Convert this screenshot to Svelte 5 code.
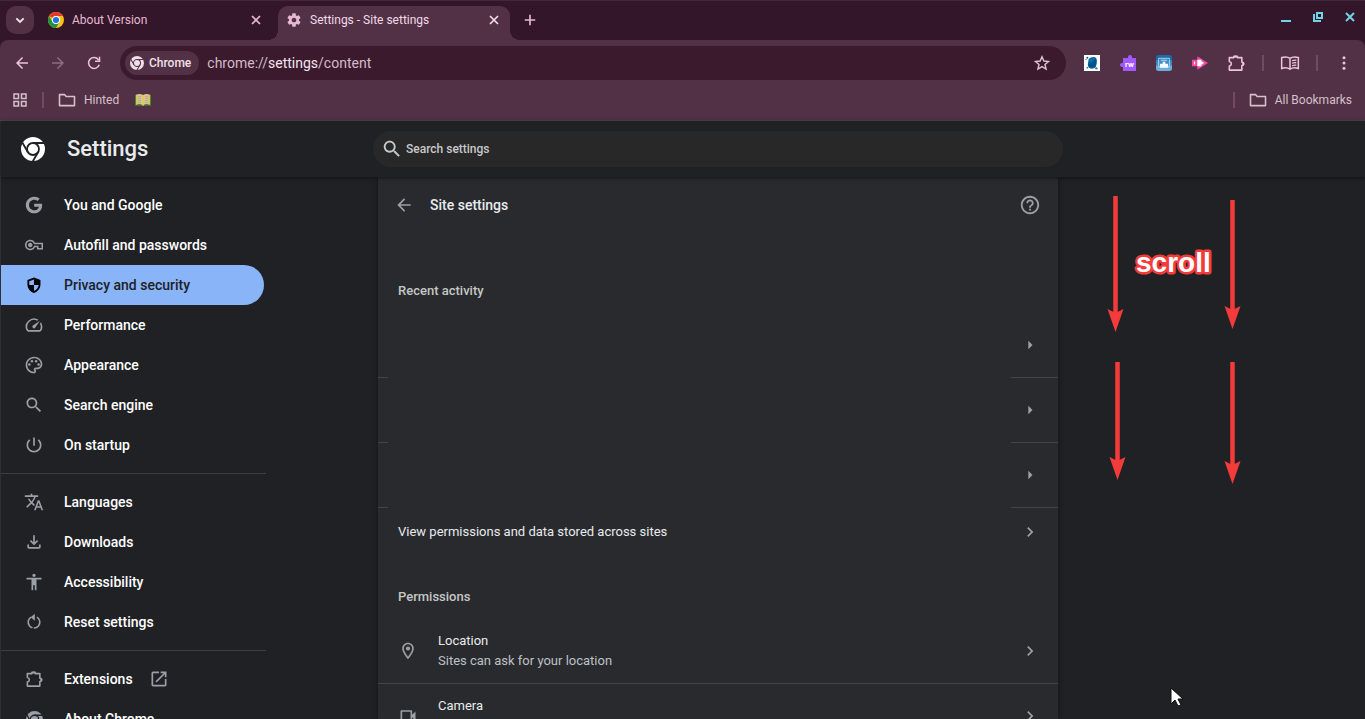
<script>
  const icons = {
    google:
      '<path transform="translate(2 2) scale(.833)" d="M12.24 10.285V14.4h6.806c-.275 1.765-2.056 5.174-6.806 5.174-4.095 0-7.439-3.389-7.439-7.574s3.345-7.574 7.439-7.574c2.33 0 3.891.989 4.785 1.849l3.254-3.138C18.189 1.186 15.479 0 12.24 0c-6.635 0-12 5.365-12 12s5.365 12 12 12c6.926 0 11.52-4.869 11.52-11.726 0-.788-.085-1.39-.189-1.989H12.24z"/>',
    key: '<path transform="translate(1.2 1.2) scale(.9)" d="M22 18h-6v-3h-2.68c-1.14 2.42-3.6 4-6.32 4-3.86 0-7-3.14-7-7s3.14-7 7-7c2.72 0 5.17 1.58 6.32 4H24v9h-2zm-4-2h4v-5H11.94l-.23-.67C11.01 8.34 9.11 7 7 7c-2.76 0-5 2.24-5 5s2.24 5 5 5c2.11 0 4.01-1.34 4.71-3.33l.23-.67H18v3zM7 15c-1.65 0-3-1.35-3-3s1.35-3 3-3 3 1.35 3 3-1.35 3-3 3z"/>',
    shield:
      '<path transform="translate(1.500 1.600) scale(.87)" d="M12 1.500L3 5v6c0 5.550 3.840 10.740 9 12 5.160-1.260 9-6.450 9-12V5l-9-3.500zm0 10.490h6.500c-.530 4.120-3 6.790-6.500 7.940V12H5.500V6.700l6.500-2.500v7.790z"/>',
    speed:
      '<path d="M20.38 8.57l-1.23 1.85a8 8 0 0 1-.22 7.58H5.07A8 8 0 0 1 15.58 6.85l1.85-1.23A10 10 0 0 0 3.35 19a2 2 0 0 0 1.72 1h13.85a2 2 0 0 0 1.74-1 10 10 0 0 0-.27-10.44z"/><path d="M10.59 15.41a2 2 0 0 0 2.83 0l5.66-8.49-8.49 5.66a2 2 0 0 0 0 2.83z"/>',
    palette:
      '<path d="M12 22C6.49 22 2 17.51 2 12S6.49 2 12 2s10 4.04 10 9c0 3.31-2.69 6-6 6h-1.77c-.28 0-.5.22-.5.5 0 .12.05.23.13.33.41.47.64 1.06.64 1.67 0 1.38-1.12 2.5-2.5 2.5zm0-18c-4.41 0-8 3.59-8 8s3.59 8 8 8c.28 0 .5-.22.5-.5 0-.16-.08-.28-.14-.35-.41-.46-.63-1.05-.63-1.65 0-1.38 1.12-2.5 2.5-2.5H16c2.21 0 4-1.79 4-4 0-3.86-3.59-7-8-7z"/><circle cx="6.500" cy="11.500" r="1.500"/><circle cx="9.500" cy="7.500" r="1.500"/><circle cx="14.500" cy="7.500" r="1.500"/><circle cx="17.500" cy="11.500" r="1.500"/>',
    search:
      '<path d="M15.500 14h-.79l-.28-.27C15.410 12.590 16 11.110 16 9.500 16 5.910 13.090 3 9.500 3S3 5.910 3 9.500 5.910 16 9.500 16c1.610 0 3.090-.590 4.230-1.570l.27.28v.79l5 4.990L20.490 19l-4.990-5zm-6 0C7.010 14 5 11.990 5 9.500S7.010 5 9.500 5 14 7.010 14 9.500 11.990 14 9.500 14z"/>',
    power:
      '<path d="M13 3h-2v10h2V3zm4.830 2.170l-1.420 1.420C17.990 7.860 19 9.810 19 12c0 3.870-3.130 7-7 7s-7-3.130-7-7c0-2.190 1.010-4.140 2.580-5.420L6.170 5.170C4.230 6.820 3 9.260 3 12c0 4.970 4.030 9 9 9s9-4.030 9-9c0-2.740-1.230-5.180-3.170-6.830z"/>',
    translate:
      '<path d="M12.870 15.070l-2.540-2.510.030-.030c1.740-1.940 2.980-4.170 3.710-6.530H17V4h-7V2H8v2H1v1.990h11.170C11.500 7.920 10.440 9.750 9 11.350 8.070 10.320 7.300 9.190 6.690 8h-2c.730 1.630 1.730 3.170 2.980 4.560l-5.090 5.020L4 19l5-5 3.110 3.110.760-2.040zM18.500 10h-2L12 22h2l1.120-3h4.750L21 22h2l-4.500-12zm-2.620 7l1.620-4.330L19.120 17h-3.240z"/>',
    download:
      '<path d="M18 15v3H6v-3H4v3c0 1.100.900 2 2 2h12c1.100 0 2-.900 2-2v-3h-2zm-1-4l-1.410-1.410L13 12.170V4h-2v8.170L8.410 9.590 7 11l5 5 5-5z"/>',
    person:
      '<path d="M12 2c1.100 0 2 .900 2 2s-.900 2-2 2-2-.900-2-2 .900-2 2-2zm9 7h-6v13h-2v-6h-2v6H9V9H3V7h18v2z"/>',
    reset:
      '<path d="M15.500 6.200a7 7 0 1 1-7 0" fill="none" stroke="currentColor" stroke-width="1.900" stroke-dasharray="18 1.500 30"/><path d="M13 2v8.500L8 6.200z"/>',
    puzzle:
      '<path d="M4 5.500h5.500v-1.500h4V5.500H19V11c3 0 3 4 0 4v5.500H4v-4.800c3.200-.6 3.200-4.800 0-5.400z" fill="none" stroke="currentColor" stroke-width="1.900" stroke-linejoin="round"/><path d="M9 5.500a2.500 2.500 0 0 1 5 0zM19.500 10.500a2.500 2.500 0 0 1 0 5z"/>',
    open: '<path d="M19 19H5V5h7V3H5c-1.110 0-2 .900-2 2v14c0 1.100.890 2 2 2h14c1.100 0 2-.900 2-2v-7h-2v7zM14 3v2h3.590l-9.830 9.830 1.410 1.410L19 6.410V10h2V3h-7z"/>',
    back: '<path d="M20 11H7.830l5.590-5.590L12 4l-8 8 8 8 1.410-1.410L7.830 13H20v-2z"/>',
    forward: '<path d="M4 11h12.170l-5.590-5.590L12 4l8 8-8 8-1.410-1.410L16.170 13H4v-2z"/>',
    reload:
      '<path d="M19 14.200A7.300 7.300 0 1 1 18.200 8" fill="none" stroke="currentColor" stroke-width="2"/><path d="M20.400 3.500v7h-7v-2h5v-5z"/>',
    help: '<path d="M11 18h2v-2h-2v2zm1-16C6.480 2 2 6.480 2 12s4.480 10 10 10 10-4.480 10-10S17.520 2 12 2zm0 18c-4.410 0-8-3.590-8-8s3.590-8 8-8 8 3.590 8 8-3.590 8-8 8zm0-14c-2.210 0-4 1.790-4 4h2c0-1.100.900-2 2-2s2 .900 2 2c0 2-3 1.750-3 5h2c0-2.250 3-2.500 3-5 0-2.210-1.790-4-4-4z"/>',
    chevron: '<path d="M10 6L8.590 7.410 13.170 12l-4.580 4.590L10 18l6-6z"/>',
    triangle: '<path d="M10 7v10l5-5z"/>',
    down: '<path d="M6.500 9.500l5.500 5.500 5.500-5.500" fill="none" stroke="currentColor" stroke-width="2.800"/>',
    close: '<path d="M6 6l12 12M18 6L6 18" fill="none" stroke="currentColor" stroke-width="2.600"/>',
    plus: '<path d="M12 5v14M5 12h14" fill="none" stroke="currentColor" stroke-width="2.200"/>',
    gear: '<path d="M19.430 12.980c.040-.320.070-.640.070-.980s-.030-.660-.070-.980l2.110-1.650c.190-.150.240-.420.120-.640l-2-3.460c-.120-.220-.390-.300-.610-.220l-2.490 1c-.520-.400-1.080-.730-1.690-.980l-.380-2.650C14.460 2.180 14.250 2 14 2h-4c-.250 0-.460.180-.490.420l-.380 2.650c-.610.250-1.170.590-1.690.980l-2.490-1c-.230-.090-.490 0-.610.220l-2 3.460c-.130.220-.070.490.120.640l2.110 1.650c-.040.320-.070.650-.070.980s.030.660.070.980l-2.110 1.650c-.190.150-.240.420-.120.640l2 3.460c.120.220.390.300.610.220l2.490-1c.520.400 1.080.730 1.690.980l.380 2.650c.030.240.240.420.490.420h4c.250 0 .460-.180.490-.420l.380-2.650c.610-.250 1.170-.590 1.690-.980l2.490 1c.230.090.490 0 .610-.220l2-3.460c.120-.220.070-.490-.120-.640l-2.110-1.650zM12 15.500c-1.930 0-3.500-1.570-3.500-3.500s1.570-3.500 3.500-3.500 3.500 1.570 3.500 3.500-1.570 3.500-3.500 3.500z"/>',
    place:
      '<path d="M12 2C8.130 2 5 5.130 5 9c0 5.250 7 13 7 13s7-7.750 7-13c0-3.870-3.130-7-7-7zM7 9c0-2.760 2.240-5 5-5s5 2.240 5 5c0 2.880-2.880 7.190-5 9.880C9.920 16.210 7 11.850 7 9z"/><circle cx="12" cy="9" r="2.500"/>',
    camera:
      '<path d="M15 7v10H5V7h10m1-2H4c-.550 0-1 .450-1 1v12c0 .550.450 1 1 1h12c.550 0 1-.450 1-1v-4.500l4 4v-11l-4 4V6c0-.550-.450-1-1-1z"/>',
    star: '<path d="M12 3.600l2.500 5.700 6.200.6-4.700 4.100 1.400 6.100-5.400-3.200-5.400 3.200 1.400-6.100-4.700-4.100 6.200-.6z" fill="none" stroke="currentColor" stroke-width="1.900"/>',
    folder:
      '<path d="M3 5.500h6l2 2.200h10v11H3z" fill="none" stroke="currentColor" stroke-width="1.900" stroke-linejoin="round"/>',
    apps: '<path d="M4 4h6v6H4zM14 4h6v6h-6zM4 14h6v6H4zM14 14h6v6h-6z" fill="none" stroke="currentColor" stroke-width="2"/>',
    dots: '<circle cx="12" cy="5" r="2"/><circle cx="12" cy="12" r="2"/><circle cx="12" cy="19" r="2"/>',
    reader:
      '<path d="M12 6.500C9.500 4.500 5 4.500 2 5.500v13c3-1 7.500-1 10 1 2.500-2 7-2 10-1v-13c-3-1-7.500-1-10 1zv13" fill="none" stroke="currentColor" stroke-width="1.800"/><path d="M14.500 9.300q2.500-1 5-.6M14.500 12.300q2.500-1 5-.6M14.500 15.300q2.500-1 5-.6" fill="none" stroke="currentColor" stroke-width="1.600"/>',
    bookColor:
      '<path d="M0 5l2-1v15h20V4l2 1v16H0z" fill="#2f7a1e"/><path d="M2 4q6-2.500 10 1v15q-4-3-10-1z" fill="#dcc49a"/><path d="M22 4q-6-2.500-10 1v15q4-3 10-1z" fill="#dcc49a"/><path d="M4 7h5M4 10h5M4 13h5M4 16h5M15 7h5M15 10h5M15 13h5M15 16h5" stroke="#b8967a" stroke-width="1"/><path d="M12 4v17M2 4v15M22 4v15" stroke="#c9dc2d" stroke-width="1.500"/>',
    extLeaf:
      '<path d="M0 0h24v24H0z" fill="#fff"/><path d="M7 6q3-3.500 8-3 4 .5 4 4v6q0 5-4 7-5 1.500-8-1.500-2-3-1-7z" fill="#0c6ca6"/><path d="M6 13q5 0 12-8 2 4 0 10-3 5-8 5-4-2-4-7z" fill="#075189"/><circle cx="5" cy="4" r="1.500" fill="#075a94"/><circle cx="18.500" cy="20" r="1.800" fill="#1a86bf"/><circle cx="5" cy="19" r="1.300" fill="#1a86bf"/><circle cx="3" cy="7" r="1" fill="#1a86bf"/>',
    extBox:
      '<rect width="24" height="24" rx="4" fill="#1c6bab"/><path d="M0 12h24v8a4 4 0 0 1-4 4H4a4 4 0 0 1-4-4z" fill="#6cadd9"/><path d="M0 8h24v8H0z" fill="#3f8cc4"/><path d="M4 5h16v13H4z" fill="none" stroke="#a9d3ee" stroke-width="1.500"/><path d="M6 13h12v6H6zM10 10h4v3h-4z" fill="#f3faff"/><path d="M7 7h10v1.500H7z" fill="#d7edfa"/>',
    extPlay:
      '<path d="M0 7h8V2l16 10L8 22v-5H0z" fill="#f04aa5"/><path d="M8 7h6v2l4 3-4 3v2H8z" fill="#fff"/><path d="M3 9l2 3-2 3" fill="#fff"/>',
  };

  const menuGroups = [
    [
      ['google', 'You and Google'],
      ['key', 'Autofill and passwords'],
      ['shield', 'Privacy and security'],
      ['speed', 'Performance'],
      ['palette', 'Appearance'],
      ['search', 'Search engine'],
      ['power', 'On startup'],
    ],
    [
      ['translate', 'Languages'],
      ['download', 'Downloads'],
      ['person', 'Accessibility'],
      ['reset', 'Reset settings'],
    ],
    [
      ['puzzle', 'Extensions'],
      ['chrome', 'About Chrome'],
    ],
  ];

  const permissions = [
    ['place', 'Location', 'Sites can ask for your location'],
    ['camera', 'Camera', ''],
  ];

  const arrows = [
    { x: 57.5, top: 19, tip: 155 },
    { x: 174.5, top: 23, tip: 152 },
    { x: 59.5, top: 185, tip: 303 },
    { x: 174.5, top: 185, tip: 307 },
  ];

  let active = $state('Privacy and security');
  let query = $state('');
</script>

{#snippet icon(name, size = 20)}
  <svg width={size} height={size} viewBox="0 0 24 24" fill="currentColor" aria-hidden="true">{@html icons[name]}</svg>
{/snippet}

{#snippet chromeMark(size, line)}
  <svg width={size} height={size} viewBox="0 0 24 24" aria-hidden="true">
    <circle cx="12" cy="12" r="12" fill="currentColor" />
    <g fill="none" stroke={line} stroke-width="1.8">
      <circle cx="12" cy="12" r="6" />
      <path d="M12 6h11M17.200 15L11.700 24.500M6.800 15L1.300 5.500" />
    </g>
  </svg>
{/snippet}

<div class="window">
  <header class="tabstrip">
    <button class="tab-search" aria-label="Search tabs">{@render icon('down', 16)}</button>
    <div class="tab">
      <svg width="16" height="16" viewBox="0 0 24 24" aria-hidden="true">
        <circle cx="12" cy="12" r="12" fill="#fbc116" />
        <path d="M12 12L1.600 6A12 12 0 0 1 22.400 6H12z" fill="#e33b2e" />
        <path d="M1.600 6A12 12 0 0 0 12 24l5.200-9L12 12 6.800 15z" fill="#229342" />
        <circle cx="12" cy="12" r="6" fill="#fff" /><circle cx="12" cy="12" r="4.600" fill="#1a73e8" />
      </svg>
      <button class="tab-title">About Version</button>
      <button class="tab-close" aria-label="Close About Version">{@render icon('close', 16)}</button>
    </div>
    <div class="tab current">
      {@render icon('gear', 16)}
      <button class="tab-title">Settings - Site settings</button>
      <button class="tab-close" aria-label="Close Settings">{@render icon('close', 16)}</button>
    </div>
    <button class="new-tab" aria-label="New tab">{@render icon('plus', 18)}</button>
    <div class="window-controls">
      <button aria-label="Minimize"><svg width="16" height="16" viewBox="0 0 16 16"><path d="M3 12h10" /></svg></button>
      <button aria-label="Restore"><svg width="16" height="16" viewBox="0 0 16 16"><path d="M7 4h5v5H7zM4 5v7h7" /></svg></button>
      <button aria-label="Close window"><svg width="16" height="16" viewBox="0 0 16 16"><path d="M4 4l8 8M12 4l-8 8" /></svg></button>
    </div>
  </header>

  <div class="chrome-bars">
    <div class="toolbar">
      <div class="button-row">
        <button aria-label="Back">{@render icon('back', 18)}</button>
        <button class="disabled" aria-label="Forward" disabled>{@render icon('forward', 18)}</button>
        <button aria-label="Reload">{@render icon('reload', 18)}</button>
      </div>
      <div class="omnibox">
        <button class="chip">{@render chromeMark(14, '#523146')}Chrome</button>
        <div class="url">chrome://<b>settings</b>/content</div>
        <button class="star" aria-label="Bookmark this tab">{@render icon('star', 18)}</button>
      </div>
      <div class="button-row">
        <button aria-label="Leaf extension">{@render icon('extLeaf', 16)}</button>
        <button aria-label="rw">
          <svg width="16" height="16" viewBox="0 0 16 16">
            <path d="M3 3h5V2a2 2 0 0 1 4 0v1h4v13H3v-4H2a2 2 0 0 1 0-4h1z" fill="#a259ff" />
            <text x="5" y="12" fill="#fff" font-family="Inter, sans-serif" font-size="7" font-weight="700">rw</text>
          </svg>
        </button>
        <button aria-label="Capture extension">{@render icon('extBox', 16)}</button>
        <button aria-label="Video extension">{@render icon('extPlay', 16)}</button>
        <button aria-label="Extensions">{@render icon('puzzle', 20)}</button>
      </div>
      <i class="divider"></i>
      <div class="button-row"><button aria-label="Reading mode">{@render icon('reader', 20)}</button></div>
      <i class="divider"></i>
      <div class="button-row"><button aria-label="Menu">{@render icon('dots', 18)}</button></div>
    </div>

    <nav class="bookmarks" aria-label="Bookmarks">
      <button aria-label="Apps">{@render icon('apps', 18)}</button>
      <i class="divider"></i>
      <button>{@render icon('folder', 20)}Hinted</button>
      <button class="emoji" aria-label="Book">{@render icon('bookColor', 16)}</button>
      <i class="divider push"></i>
      <button>{@render icon('folder', 20)}All Bookmarks</button>
    </nav>
  </div>

  <div class="page">
    <header class="settings-header">
      <div class="brand">
        {@render chromeMark(24, '#202124')}
        <h1>Settings</h1>
      </div>
      <label class="search">
        {@render icon('search', 22)}
        <input type="text" placeholder="Search settings" aria-label="Search settings" bind:value={query} />
      </label>
    </header>

    <div class="content">
      <div class="left">
        <nav class="menu" aria-label="Settings">
          {#each menuGroups as group, i}
            {#if i > 0}<hr />{/if}
            {#each group as [name, label]}
              <a href="#{name}" class:selected={active === label} onclick={() => (active = label)}>
                {#if name === 'chrome'}
                  <span class="mark">{@render chromeMark(17, '#202124')}</span>
                {:else}
                  {@render icon(name)}
                {/if}
                <span>{label}</span>
                {#if name === 'puzzle'}<span class="external">{@render icon('open')}</span>{/if}
              </a>
            {/each}
          {/each}
        </nav>
      </div>

      <main class="card">
        <div class="title-row">
          <button aria-label="Back">{@render icon('back')}</button>
          <h2>Site settings</h2>
          <button class="end" aria-label="Help">{@render icon('help', 22)}</button>
        </div>
        <h3 class="recent">Recent activity</h3>
        {#each [1, 2, 3] as n}
          <div class="row site">
            <button class="end" aria-label="Site details {n}">{@render icon('triangle')}</button>
          </div>
        {/each}
        <a class="row link" href="#all">
          <span>View permissions and data stored across sites</span>
          <span class="end">{@render icon('chevron')}</span>
        </a>
        <h3>Permissions</h3>
        {#each permissions as [name, title, text]}
          <a class="row" href="#{name}">
            {@render icon(name)}
            <span class="lines"><span>{title}</span><small>{text}</small></span>
            <span class="end">{@render icon('chevron')}</span>
          </a>
        {/each}
      </main>

      <aside class="right">
        <svg class="notes" width="307" height="542" viewBox="0 0 307 542">
          {#each arrows as a}
            <path d="M{a.x} {a.top}V{a.tip - 16}" stroke="#8f2c2f" stroke-width="5" />
            <path d="M{a.x} {a.top}V{a.tip - 16}" stroke="#f43b3b" stroke-width="4" />
            <path d="M{a.x} {a.tip}l-8-23 8 4 8-4z" fill="#f43b3b" />
          {/each}
          <text x="78" y="95">scroll</text>
          <path d="M113 511v16l4-4 3 6 3-1-3-6h5z" fill="#fff" stroke="#101113" stroke-width="1" />
        </svg>
      </aside>
    </div>
  </div>
</div>

<style>
  :global(body) {
    margin: 0;
    background: #202124;
  }
  .window {
    height: 100vh;
    overflow: hidden;
    display: flex;
    flex-direction: column;
    font-family: Roboto, 'Liberation Sans', sans-serif;
    background: #331629;
  }
  svg {
    flex: none;
    display: block;
  }
  button {
    border: 0;
    padding: 0;
    background: none;
    color: inherit;
    font: inherit;
    display: flex;
    align-items: center;
    justify-content: center;
  }
  a {
    color: inherit;
    text-decoration: none;
  }
  h1,
  h2,
  h3 {
    margin: 0;
    font-weight: 500;
  }

  .tabstrip {
    box-sizing: border-box;
    height: 40px;
    flex: none;
    display: flex;
    align-items: flex-start;
    gap: 6px;
    padding: 5px 7px 0 6px;
    border-top: 1px solid #44283a;
    color: #e6b9d2;
    font-size: 12px;
  }
  .tab-search,
  .new-tab {
    width: 28px;
    height: 28px;
    border-radius: 10px;
  }
  .tab-search {
    background: #523146;
    color: #f3e3ec;
  }
  .tab {
    box-sizing: border-box;
    position: relative;
    width: 232px;
    height: 34px;
    padding: 0 8px 6px;
    display: flex;
    align-items: center;
    gap: 8px;
    border-radius: 10px 10px 0 0;
  }
  .tab.current {
    background: #523146;
  }
  .tab.current .tab-title,
  .tab.current .tab-close {
    color: #f0dbe6;
  }
  .tab.current::before,
  .tab.current::after {
    content: '';
    position: absolute;
    bottom: 0;
    width: 10px;
    height: 10px;
  }
  .tab.current::before {
    left: -10px;
    background: radial-gradient(circle at 0 0, transparent 10px, #523146 10px);
  }
  .tab.current::after {
    right: -10px;
    background: radial-gradient(circle at 100% 0, transparent 10px, #523146 10px);
  }
  .tab-title {
    flex: 1;
    justify-content: flex-start;
  }
  .window-controls {
    margin-left: auto;
    display: flex;
    gap: 16px;
    padding-top: 3px;
  }
  .window-controls path {
    fill: none;
    stroke: #72d3e8;
    stroke-width: 2;
  }

  .chrome-bars {
    flex: none;
    background: #523146;
    border-radius: 8px 8px 0 0;
    border-bottom: 1px solid #4b4453;
    color: #efc1da;
  }
  .toolbar {
    display: flex;
    align-items: center;
    gap: 12px;
    padding: 6px 7px 0 8px;
  }
  .button-row {
    display: flex;
    gap: 8px;
  }
  .button-row button {
    width: 28px;
    height: 28px;
  }
  .button-row .disabled {
    color: #8f6c80;
  }
  .divider {
    width: 2px;
    height: 16px;
    background: #73495f;
  }
  .omnibox {
    box-sizing: border-box;
    flex: 1;
    height: 34px;
    border-radius: 17px;
    background: #3b1a2e;
    display: flex;
    align-items: center;
    gap: 8px;
    padding: 0 15px 0 5px;
  }
  .chip {
    height: 24px;
    border-radius: 12px;
    padding: 0 8px 0 5px;
    gap: 5px;
    background: #523146;
    color: #f0e0ea;
    font-size: 12px;
    font-weight: 500;
  }
  .url {
    flex: 1;
    font-size: 14px;
    color: #d3bac8;
  }
  .url b {
    font-weight: 400;
    color: #f5e6ef;
  }
  .star {
    color: #d9c5d0;
  }
  .bookmarks {
    height: 40px;
    display: flex;
    align-items: center;
    gap: 13px;
    padding: 0 13px 0 11px;
    font-size: 12px;
    color: #d3c0ca;
  }
  .bookmarks button {
    gap: 7px;
  }
  .bookmarks .emoji {
    padding-left: 3px;
  }
  .bookmarks .push {
    margin-left: auto;
  }

  .page {
    flex: 1;
    min-height: 0;
    display: flex;
    flex-direction: column;
    background: #202124;
    border-left: 1px solid #2f3034;
    color: #e8eaed;
  }
  .settings-header {
    height: 56px;
    flex: none;
    display: grid;
    grid-template-columns: minmax(0, 372fr) minmax(0, 690px) minmax(0, 302fr);
    align-items: center;
    position: relative;
    z-index: 1;
    background: #202124;
    box-shadow: 0 1px 4px rgba(0, 0, 0, 0.5);
  }
  .brand {
    display: flex;
    align-items: center;
    gap: 22px;
    padding-left: 20px;
    color: #fff;
  }
  h1 {
    font-size: 22px;
    line-height: 28px;
    color: #e8eaed;
  }
  .search {
    height: 36px;
    border-radius: 18px;
    background: #282828;
    display: flex;
    align-items: center;
    gap: 3px;
    padding: 0 16px 0 8px;
    color: #c7c9cc;
  }
  .search input {
    flex: 1;
    border: 0;
    padding: 0;
    outline: 0;
    background: none;
    color: inherit;
    font: 500 12px Roboto, 'Liberation Sans', sans-serif;
  }
  .search input::placeholder {
    color: #c7c9cc;
    opacity: 1;
  }

  .content {
    flex: 1;
    min-height: 0;
    display: flex;
  }
  .left {
    flex: 377 1 0;
  }
  .menu {
    width: 265px;
    padding-top: 8px;
    font-size: 14px;
    font-weight: 500;
    color: #fff;
  }
  .menu a {
    height: 40px;
    margin-right: 2px;
    padding-left: 23px;
    display: flex;
    align-items: center;
    gap: 20px;
    border-radius: 0 20px 20px 0;
  }
  .menu a > :global(svg),
  .mark,
  .external {
    color: #9aa0a6;
  }
  .mark {
    width: 20px;
    display: flex;
    justify-content: center;
  }
  .external {
    margin-left: -4px;
  }
  .menu a.selected {
    background: #8ab4f8;
    color: #202124;
  }
  .menu a.selected > :global(svg) {
    color: #000;
  }
  hr {
    height: 1px;
    margin: 8px 0;
    border: 0;
    background: #3c3d40;
  }

  .card {
    flex: 0 1 680px;
    background: #292a2d;
    box-shadow: 0 0 6px rgba(0, 0, 0, 0.4);
    font-size: 13px;
    line-height: 20px;
  }
  .title-row {
    height: 56px;
    display: flex;
    align-items: center;
    gap: 16px;
    padding: 0 17px 0 16px;
    color: #9aa0a6;
  }
  h2 {
    font-size: 14px;
    color: #e8eaed;
  }
  .end {
    margin-left: auto;
    color: #9aa0a6;
  }
  h3 {
    padding: 31px 20px 12px;
    font-size: 13px;
    line-height: 20px;
    color: #c4c7c5;
  }
  h3.recent {
    padding-top: 48px;
  }
  .row {
    position: relative;
    height: 64px;
    display: flex;
    align-items: center;
    gap: 20px;
    padding: 0 18px 0 20px;
    border-bottom: 1px solid #434447;
  }
  .row > :global(svg) {
    color: #9aa0a6;
  }
  /* Blank panel that hides the site name and its part of the rule. */
  .site::before {
    content: '';
    position: absolute;
    inset: 0 47px -1px 10px;
    background: #292a2d;
  }
  .site .end {
    position: relative;
  }
  .row.link {
    height: 48px;
    border-bottom: 0;
  }
  .lines {
    display: flex;
    flex-direction: column;
  }
  small {
    min-height: 20px;
    font-size: 13px;
    color: #bdc1c6;
  }
  .right {
    flex: 307 1 0;
    position: relative;
  }
  .notes {
    position: absolute;
    top: 0;
    left: 0;
  }
  .notes text {
    font: bold 28px 'Liberation Sans', sans-serif;
    fill: #fff;
    stroke: #f43b3b;
    stroke-width: 5px;
    stroke-linejoin: round;
    paint-order: stroke;
  }
</style>
